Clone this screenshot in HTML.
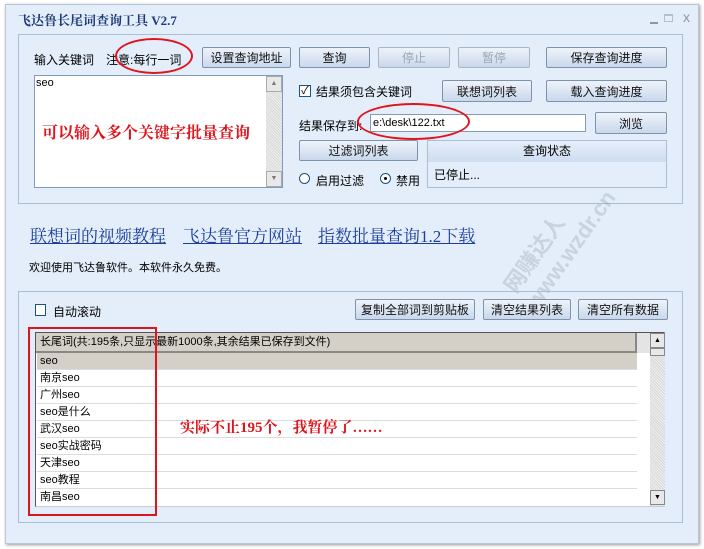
<!DOCTYPE html>
<html><head><meta charset="utf-8"><style>
*{margin:0;padding:0;box-sizing:border-box}
body{width:704px;height:549px;background:#fff;position:relative;overflow:hidden;font-family:"Liberation Sans","Noto Sans CJK SC",sans-serif;font-size:12px;color:#000}
.a{position:absolute}
.win{left:5px;top:4px;width:694px;height:540px;background:#e4eefa;border:1px solid #b9c6d6;box-shadow:1px 1px 3px #999}
.grp{border:1px solid #a9bfd6}
.btn{position:absolute;border:1px solid #7f93ad;border-radius:2px;background:linear-gradient(#eef3fa,#c9d8ec);text-align:center;font-size:12px;color:#111;display:flex;align-items:center;justify-content:center}
.dis{color:#9aa6b5;border-color:#aab6c6}
.ell{position:absolute;border:2px solid #e0141c;border-radius:50%}
.row{position:absolute;left:37px;width:600px;height:17px;border-bottom:1px solid #dcdcdc;padding-left:3px;line-height:17px;font-size:11px}
.lnk{position:absolute;top:222px;font-size:17px;color:#1b3f9e;text-decoration:underline;font-family:"Liberation Serif","Noto Serif CJK SC",serif}
</style></head><body>
<div class="a win"></div>
<div class="a" style="left:18px;top:10px;font-size:13px;font-weight:bold;color:#1f3a78;font-family:'Liberation Serif','Noto Serif CJK SC',serif">飞达鲁长尾词查询工具 V2.7</div>
<div class="a" style="left:650px;top:22px;width:8px;height:2px;background:#8a96a6"></div>
<div class="a" style="left:664px;top:14px;width:9px;height:8px;border:1px solid #b5bfcc;border-top-width:2px"></div>
<div class="a" style="left:683px;top:9px;font-size:14px;color:#8a96a6">x</div>

<div class="a grp" style="left:18px;top:34px;width:665px;height:170px"></div>
<div class="a" style="left:34px;top:51px">输入关键词</div>
<div class="a" style="left:106px;top:51px">注意:每行一词</div>
<div class="ell" style="left:115px;top:38px;width:78px;height:36px"></div>
<div class="btn" style="left:202px;top:47px;width:89px;height:21px">设置查询地址</div>
<div class="btn" style="left:299px;top:47px;width:71px;height:21px">查询</div>
<div class="btn dis" style="left:378px;top:47px;width:72px;height:21px">停止</div>
<div class="btn dis" style="left:458px;top:47px;width:72px;height:21px">暂停</div>
<div class="btn" style="left:546px;top:47px;width:121px;height:21px">保存查询进度</div>

<div class="a" style="left:34px;top:75px;width:249px;height:113px;background:#fff;border:1px solid #7f9db9"></div>
<div class="a" style="left:266px;top:76px;width:16px;height:111px;background:repeating-linear-gradient(45deg,#eee 0 1px,#d8d8d8 1px 2px)"></div>
<div class="a" style="left:266px;top:76px;width:16px;height:16px;background:#e8e8e8;border:1px solid #aaa;font-size:7px;text-align:center;line-height:14px;color:#777">▲</div>
<div class="a" style="left:266px;top:171px;width:16px;height:16px;background:#e8e8e8;border:1px solid #aaa;font-size:7px;text-align:center;line-height:14px;color:#777">▼</div>
<div class="a" style="left:36px;top:77px;font-size:11px">seo</div>
<div class="a" style="left:42px;top:120px;font-size:16px;font-weight:bold;color:#e0141c;font-family:'Liberation Serif','Noto Serif CJK SC',serif">可以输入多个关键字批量查询</div>

<div class="a" style="left:299px;top:85px;width:12px;height:12px;border:1px solid #1c5180;background:#fff;font-size:11px;line-height:10px;text-align:center">✓</div>
<div class="a" style="left:316px;top:83px">结果须包含关键词</div>
<div class="btn" style="left:442px;top:80px;width:90px;height:22px">联想词列表</div>
<div class="btn" style="left:546px;top:80px;width:121px;height:22px">载入查询进度</div>
<div class="a" style="left:299px;top:117px">结果保存到:</div>
<div class="a" style="left:370px;top:114px;width:216px;height:18px;background:#fff;border:1px solid #7f9db9;font-size:11px;padding-left:2px;line-height:16px">e:\desk\122.txt</div>
<div class="ell" style="left:357px;top:103px;width:113px;height:37px"></div>
<div class="btn" style="left:595px;top:112px;width:72px;height:22px">浏览</div>
<div class="btn" style="left:299px;top:140px;width:119px;height:21px">过滤词列表</div>
<div class="a" style="left:427px;top:140px;width:240px;height:48px;border:1px solid #a9bfd6;background:#e4eefa"></div>
<div class="a" style="left:428px;top:141px;width:238px;height:21px;background:linear-gradient(#e6eef9,#cdddf0);text-align:center;line-height:21px">查询状态</div>
<div class="a" style="left:434px;top:166px">已停止...</div>
<div class="a" style="left:299px;top:173px;width:11px;height:11px;border:1px solid #1c5180;border-radius:50%;background:#fff"></div>
<div class="a" style="left:316px;top:172px">启用过滤</div>
<div class="a" style="left:380px;top:173px;width:11px;height:11px;border:1px solid #1c5180;border-radius:50%;background:#fff"><div style="margin:3px;width:3px;height:3px;background:#000;border-radius:50%"></div></div>
<div class="a" style="left:396px;top:172px">禁用</div>

<div class="lnk" style="left:30px">联想词的视频教程</div>
<div class="lnk" style="left:183px">飞达鲁官方网站</div>
<div class="lnk" style="left:318px">指数批量查询1.2下载</div>
<div class="a" style="left:29px;top:259px;font-size:11px">欢迎使用飞达鲁软件。本软件永久免费。</div>
<div class="a" style="left:495px;top:200px;font-size:22px;font-weight:bold;color:rgba(150,160,175,.35);transform:rotate(-55deg);transform-origin:left top;top:280px">网赚达人 www.wzdr.cn</div>

<div class="a grp" style="left:18px;top:291px;width:665px;height:232px"></div>
<div class="a" style="left:35px;top:304px;width:11px;height:12px;border:1px solid #1c5180;background:#fff"></div>
<div class="a" style="left:53px;top:303px">自动滚动</div>
<div class="btn" style="left:355px;top:299px;width:120px;height:21px">复制全部词到剪贴板</div>
<div class="btn" style="left:483px;top:299px;width:88px;height:21px">清空结果列表</div>
<div class="btn" style="left:578px;top:299px;width:90px;height:21px">清空所有数据</div>

<div class="a" style="left:35px;top:332px;width:630px;height:175px;background:#fff;border:1px solid #555;border-right-color:#ccc;border-bottom-color:#ccc"></div>
<div class="a" style="left:36px;top:333px;width:601px;height:20px;background:#d4d0c8;border-bottom:2px solid #888;border-right:2px solid #888;padding-left:4px;line-height:18px;font-size:11px">长尾词(共:195条,只显示最新1000条,其余结果已保存到文件)</div>
<div class="a" style="left:637px;top:333px;width:13px;height:20px;background:#e4e4e4"></div>
<div class="a" style="left:650px;top:333px;width:15px;height:173px;background:repeating-linear-gradient(45deg,#eee 0 1px,#d8d8d8 1px 2px)"></div>
<div class="a" style="left:650px;top:333px;width:15px;height:15px;background:#e8e8e8;border:1px solid #888;font-size:7px;text-align:center;line-height:13px">▲</div>
<div class="a" style="left:650px;top:348px;width:15px;height:8px;background:#e8e8e8;border:1px solid #888"></div>
<div class="a" style="left:650px;top:490px;width:15px;height:15px;background:#e8e8e8;border:1px solid #888;font-size:7px;text-align:center;line-height:13px">▼</div>
<div class="row" style="top:353px;background:#d4d0c8">seo</div>
<div class="row" style="top:370px">南京seo</div>
<div class="row" style="top:387px">广州seo</div>
<div class="row" style="top:404px">seo是什么</div>
<div class="row" style="top:421px">武汉seo</div>
<div class="row" style="top:438px">seo实战密码</div>
<div class="row" style="top:455px">天津seo</div>
<div class="row" style="top:472px">seo教程</div>
<div class="row" style="top:489px;border:0">南昌seo</div>
<div class="a" style="left:28px;top:327px;width:129px;height:189px;border:2px solid #e0141c"></div>
<div class="a" style="left:180px;top:416px;font-size:15px;font-weight:bold;color:#e0141c;font-family:'Liberation Serif','Noto Serif CJK SC',serif">实际不止195个，我暂停了……</div>
</body></html>
